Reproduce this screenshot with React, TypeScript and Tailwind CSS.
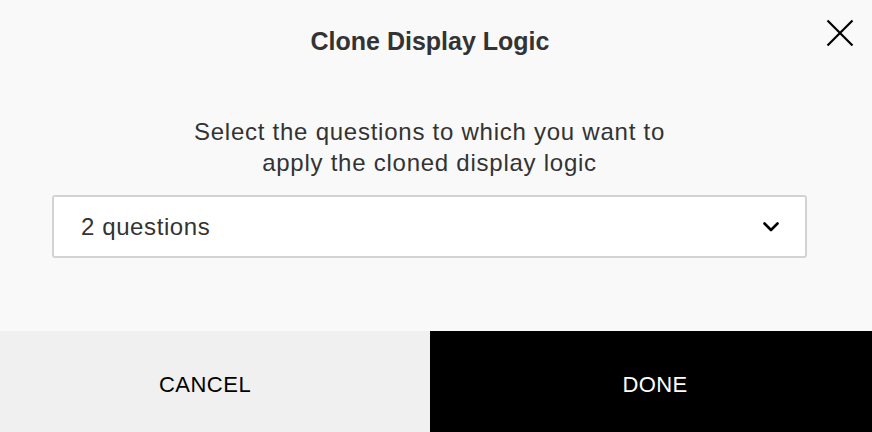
export default function App() {
  return (
    <div
      className="w-[872px] h-[432px] bg-[#f9f9f9] flex flex-col text-[#333]"
      style={{ fontFamily: '"Liberation Sans", Arial, sans-serif' }}
    >
      {/* Header */}
      <div className="relative h-[82px] flex items-center justify-center pr-[12px]">
        <h2 className="text-[25px] font-bold leading-none">Clone Display Logic</h2>
        <button className="absolute right-[18px] top-[19px] w-[28px] h-[28px] flex items-center justify-center">
          <svg width="28" height="28" viewBox="0 0 28 28" fill="none" stroke="#000" strokeWidth="2.2">
            <path d="M1.5 1.5 L26.5 26.5 M26.5 1.5 L1.5 26.5" />
          </svg>
        </button>
      </div>

      {/* Body */}
      <div className="flex-1 pl-[52px] pr-[65px] pt-[34px]">
        <p className="text-center text-[24px] leading-[31px] tracking-[0.75px]">
          Select the questions to which you want to
          <br />
          apply the cloned display logic
        </p>
        <div className="mt-[17px] h-[63px] bg-white border-2 border-[#d3d3d3] rounded-[3px] flex items-center justify-between pl-[27px] pr-[26px]">
          <span className="text-[24px] tracking-[0.6px]">2 questions</span>
          <svg width="16" height="10" viewBox="0 0 16 10" fill="none" stroke="#000" strokeWidth="2.6" strokeLinecap="round" strokeLinejoin="round">
            <path d="M1.5 1.5 L8 8 L14.5 1.5" />
          </svg>
        </div>
      </div>

      {/* Footer */}
      <div className="h-[101px] flex">
        <button className="w-[430px] bg-[#f0f0f0] text-black text-[22px] tracking-[0.5px] pr-[20px] pt-[6px]">
          CANCEL
        </button>
        <button className="flex-1 bg-black text-white text-[22px] tracking-[0.3px] pl-[8px] pt-[6px]">
          DONE
        </button>
      </div>
    </div>
  );
}
